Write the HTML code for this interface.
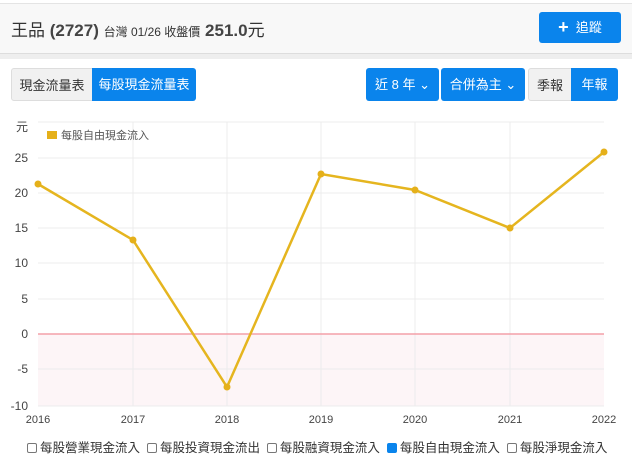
<!DOCTYPE html>
<html><head><meta charset="utf-8"><style>
*{margin:0;padding:0;box-sizing:border-box}
body{width:632px;height:460px;background:#fff;font-family:"Liberation Sans","Noto Sans CJK TC",sans-serif;position:relative;overflow:hidden;color:#333}
.hdr{position:absolute;left:0;top:3px;width:632px;height:51px;background:#f8f8f8;border-top:1px solid #e4e4e4;border-bottom:1px solid #ddd}
.gap{position:absolute;left:0;top:54px;width:632px;height:5px;background:#eee}
.t{position:absolute;left:11px;top:16px;font-size:17px;white-space:nowrap}
.b{position:absolute;height:33px;top:68px;font-size:13px;line-height:33px;text-align:center;color:#fff;background:#0a84ec;border-radius:3px}
.g{background:#f1f1f1;color:#333;border:1px solid #ddd}
.cb{display:inline-block;width:10px;height:10px;border:1px solid #777;border-radius:2px;vertical-align:-1px;margin-right:3px}
</style></head><body>
<div class="hdr"></div><div class="gap"></div>
<div class="t">王品 <b style="color:#444">(2727)</b> <span style="font-size:12px">台灣 01/26 收盤價</span> <b style="color:#444">251.0</b>元</div>
<div style="position:absolute;left:539px;top:12px;width:82px;height:31px;background:#0a84ec;border-radius:3px;color:#fff;font-size:13px;line-height:31px;text-align:center"><b style="font-size:18px;vertical-align:-1px">+</b>&nbsp; 追蹤</div>
<div class="b g" style="left:11px;width:82px;border-radius:3px 0 0 3px">現金流量表</div>
<div class="b" style="left:92px;width:104px;border-radius:0 3px 3px 0">每股現金流量表</div>
<div class="b" style="left:366px;width:73px">近 8 年 ⌄</div>
<div class="b" style="left:441px;width:84px">合併為主 ⌄</div>
<div class="b g" style="left:528px;width:44px;border-radius:3px 0 0 3px">季報</div>
<div class="b" style="left:571px;width:47px;border-radius:0 3px 3px 0">年報</div>
<svg style="position:absolute;left:0;top:110px" width="632" height="325" font-family="Liberation Sans" font-size="12" fill="#444">
<rect x="38" y="224" width="566" height="72" fill="#fdf5f7"/>
<g stroke="#ececec">
<line x1="38" y1="12" x2="604" y2="12"/><line x1="38" y1="48" x2="604" y2="48"/><line x1="38" y1="83" x2="604" y2="83"/><line x1="38" y1="118" x2="604" y2="118"/><line x1="38" y1="153" x2="604" y2="153"/><line x1="38" y1="189" x2="604" y2="189"/><line x1="38" y1="259" x2="604" y2="259"/><line x1="38" y1="296" x2="604" y2="296"/>
<line x1="133" y1="12" x2="133" y2="296"/><line x1="227" y1="12" x2="227" y2="296"/><line x1="321" y1="12" x2="321" y2="296"/><line x1="415" y1="12" x2="415" y2="296"/><line x1="510" y1="12" x2="510" y2="296"/></g>
<line x1="38" y1="224" x2="604" y2="224" stroke="#f4a0a8" stroke-width="1.5"/>
<g text-anchor="end"><text x="28" y="21">元</text><text x="28" y="52">25</text><text x="28" y="87">20</text><text x="28" y="122">15</text><text x="28" y="157">10</text><text x="28" y="193">5</text><text x="28" y="228">0</text><text x="28" y="263">-5</text><text x="28" y="300">-10</text></g>
<g text-anchor="middle" font-size="11"><text x="38" y="313">2016</text><text x="133" y="313">2017</text><text x="227" y="313">2018</text><text x="321" y="313">2019</text><text x="415" y="313">2020</text><text x="510" y="313">2021</text><text x="604" y="313">2022</text></g>
<rect x="47" y="21" width="10" height="8" fill="#e5b01a"/><text x="61" y="29" font-size="11" fill="#555">每股自由現金流入</text>
<polyline fill="none" stroke="#e5b51f" stroke-width="2.5" points="38,74 133,130 227,277 321,64 415,80 510,118 604,42"/>
<g fill="#e5b01a"><circle cx="38" cy="74" r="3.5"/><circle cx="133" cy="130" r="3.5"/><circle cx="227" cy="277" r="3.5"/><circle cx="321" cy="64" r="3.5"/><circle cx="415" cy="80" r="3.5"/><circle cx="510" cy="118" r="3.5"/><circle cx="604" cy="42" r="3.5"/></g>
</svg>
<div style="position:absolute;left:27px;top:437px;font-size:12.5px;white-space:nowrap;color:#333">
<span class="cb"></span>每股營業現金流入&nbsp; <span class="cb"></span>每股投資現金流出&nbsp; <span class="cb"></span>每股融資現金流入&nbsp; <span class="cb" style="background:#0a84ec;border-color:#0a84ec"></span>每股自由現金流入&nbsp; <span class="cb"></span>每股淨現金流入</div>
</body></html>
